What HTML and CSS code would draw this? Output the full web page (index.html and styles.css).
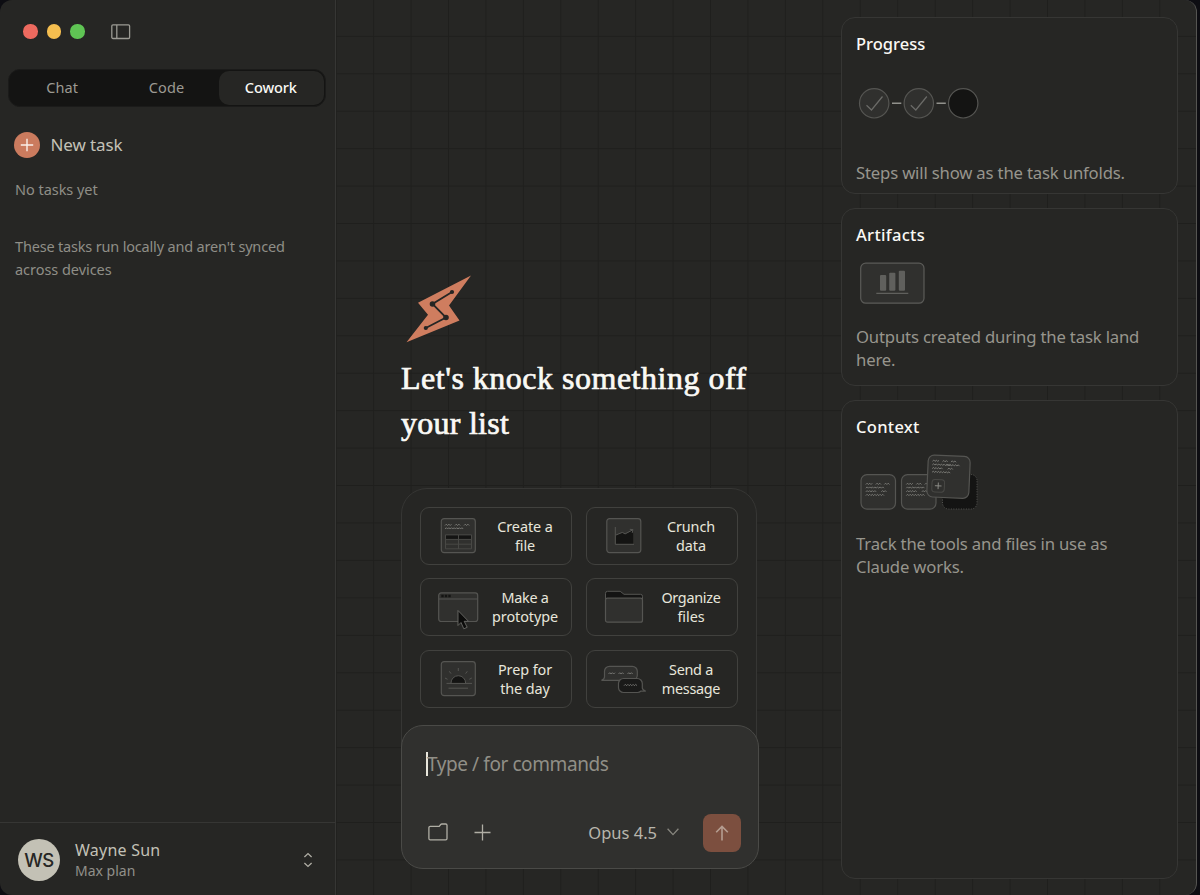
FILE: index.html
```html
<!DOCTYPE html>
<html lang="en">
<head>
<meta charset="utf-8">
<title>Cowork</title>
<link rel="stylesheet" href="styles.css">
</head>
<body>
<div class="window">
  <aside class="sidebar">
    <div class="titlebar">
      <span class="light light-red"></span>
      <span class="light light-yellow"></span>
      <span class="light light-green"></span>
      <svg class="panel-icon" width="20" height="16" viewBox="0 0 20 16"><rect x=".8" y=".9" width="17.800" height="13.600" rx="1.200"/><path d="M5.800.9v13.600"/></svg>
    </div>
    <nav class="tabs">
      <span class="tab">Chat</span>
      <span class="tab">Code</span>
      <span class="tab tab-active">Cowork</span>
    </nav>
    <div class="new-task">
      <svg width="26" height="26" viewBox="0 0 26 26"><circle cx="13" cy="13" r="13" fill="#cb7b5e"/><path d="M13 6.800v12.400M6.800 13h12.400" stroke="#fbefe9" stroke-width="1.400"/></svg>
      <span class="new-task-label">New task</span>
    </div>
    <p class="side-note">No tasks yet</p>
    <p class="side-note side-info"><span class="snug">These tasks run locally and aren't synced</span><br>across devices</p>
    <div class="account">
      <span class="avatar">WS</span>
      <div class="account-text">
        <div class="account-name">Wayne Sun</div>
        <div class="account-plan">Max plan</div>
      </div>
      <svg class="updown" width="10" height="16" viewBox="0 0 10 16"><path d="M1.400 5 5 1.600 8.600 5M1.400 11 5 14.400 8.600 11"/></svg>
    </div>
  </aside>

  <main class="main">
    <svg class="bolt" width="68" height="70" viewBox="0 0 68 70">
      <path d="M66 1.500 13 28.800l10 12L1.500 68.300 54.500 46.500 44 31.500z" fill="#cf7d5f"/>
      <g stroke="#262624" stroke-width="1.800" fill="#262624"><path d="M47 18 27.500 30 41 43.500 20.800 54" fill="none"/><circle cx="47" cy="18" r="1.200"/><circle cx="27.500" cy="30" r="1.900"/><circle cx="41" cy="43.500" r="1.900"/><circle cx="20.800" cy="54" r="1.200"/></g>
    </svg>
    <h1 class="headline"><span class="headline-wide">Let's knock something off</span><br>your list</h1>

    <div class="ideas">
      <button class="idea">
        <svg class="art" width="50" height="36" viewBox="0 0 50 36">
          <rect class="sheet" x="8.300" y=".6" width="34" height="34" rx="2.800"/>
          <path class="wave" d="M12 7.500l1.300-1.300 1.300 1.300 1.300-1.300 1.300 1.300 1.300-1.300M22 7.500l1.300-1.300 1.300 1.300 1.300-1.300 1.300 1.300M31 7.500l1.300-1.300 1.300 1.300 1.300-1.300 1.300 1.300M12 11l1.300-1.300 1.300 1.300 1.300-1.300 1.300 1.300 1.300-1.300 1.300 1.300 1.300-1.300 1.300 1.300 1.300-1.300 1.300 1.300 1.300-1.300 1.300 1.300 1.300-1.300 1.300 1.300"/>
          <path fill="#141413" d="M13 17.300h25v3.700H13z"/>
          <path class="line line-soft" d="M12.500 16.800h26v14h-26zM12.500 21.400h26M12.500 26.200h26M25.500 17v14"/>
        </svg>
        <span class="label">Create a<br>file</span>
      </button>
      <button class="idea">
        <svg class="art" width="50" height="36" viewBox="0 0 50 36">
          <rect class="sheet" x="7.800" y=".6" width="34" height="34" rx="2.800"/>
          <path fill="#141413" d="M16.800 17l6.500-2.600 2.800 1.500L34.200 12v14H16.800z"/>
          <path class="line" d="M16.300 9v17.300H35M17 17l6.300-2.600 2.800 1.500 7.900-4.200M30.800 11.300l3.200.4-.8 3.200"/>
        </svg>
        <span class="label">Crunch<br>data</span>
      </button>
      <button class="idea">
        <svg class="art" width="50" height="36" viewBox="0 0 50 36">
          <rect class="sheet" x="5.700" y="3.900" width="39" height="28.600" rx="2.500"/>
          <path class="line" d="M5.700 10h39"/><path fill="#141413" d="M8.300 5.700h2.400v2.600H8.300zM11.800 5.700h2.400v2.600h-2.400zM15.300 5.700h2.400v2.600h-2.400z"/>
          <path d="M25 21.500v15l3-3 2.800 6.300 3.400-1.500-3-6h4.300z" fill="#0c0c0b" stroke="#6b6b68" stroke-width=".9"/>
        </svg>
        <span class="label"><span class="tight">Make a</span><br>prototype</span>
      </button>
      <button class="idea">
        <svg class="art" width="50" height="36" viewBox="0 0 50 36">
          <path d="M6.500 12V4.300a2 2 0 0 1 2-2h12.700l3.800 3h16.500a2 2 0 0 1 2 2V12z" fill="#141413" stroke="#555552"/>
          <rect class="sheet" x="6.500" y="9.200" width="37" height="24" rx="2"/>
        </svg>
        <span class="label"><span class="tight">Organize</span><br>files</span>
      </button>
      <button class="idea">
        <svg class="art" width="50" height="36" viewBox="0 0 50 36">
          <rect class="sheet" x="8.300" y=".6" width="34" height="34" rx="2.800"/>
          <path d="M18 22a7.300 7.300 0 0 1 14.600 0z" fill="#141413"/>
          <path class="line" d="M13.500 22.400h25.500M15.500 27.200h19.500M25.300 7v3M16.300 10.300l1.700 2.300M34.300 10.300l-1.700 2.300M12 17l2.500 1.300M38.800 17l-2.500 1.300M18 22a7.300 7.300 0 0 1 14.600 0"/>
        </svg>
        <span class="label">Prep for<br>the day</span>
      </button>
      <button class="idea">
        <svg class="art" width="50" height="36" viewBox="0 0 50 36">
          <path class="sheet" d="M10.500 5.300h22.800a5 5 0 0 1 5 5v4a5 5 0 0 1-5 5H2.500c1.800-.8 3-1.600 3-3.300v-5.700a5 5 0 0 1 5-5z"/>
          <path class="sheet sheet-dark" d="M24.500 17.500h13.800a5 5 0 0 1 5 5V27c0 1.300 1.300 2.200 3.500 3.200l-4.800-.2a5 5 0 0 1-3.700 1.500H24.500a5 5 0 0 1-5-5v-4a5 5 0 0 1 5-5z"/>
          <path class="wave" d="M9.500 13l1.300-1.300 1.300 1.300 1.300-1.300 1.300 1.300 1.300-1.300M19.500 13l1.300-1.300 1.300 1.300 1.300-1.300 1.300 1.300M28.500 13l1.300-1.300 1.300 1.300 1.300-1.300 1.300 1.300M25 24.700l1.300-1.300 1.300 1.300 1.300-1.300 1.300 1.300 1.300-1.300 1.300 1.300 1.300-1.300 1.300 1.300 1.300-1.300 1.300 1.300"/>
        </svg>
        <span class="label"><span class="tight">Send a</span><br><span class="tight">message</span></span>
      </button>
    </div>

    <div class="composer">
      <div class="prompt"><span class="caret"></span><span>Type / for commands</span></div>
      <div class="composer-bar">
        <svg class="tool" width="20" height="18" viewBox="0 0 20 18"><path d="M.9 4.600a1.300 1.300 0 0 1 1.300-1.300h9l1.500-1.800a1.500 1.500 0 0 1 1.100-.5h3.900a1.300 1.300 0 0 1 1.300 1.300v13.200a1.300 1.300 0 0 1-1.300 1.300H2.200A1.300 1.300 0 0 1 .9 15.500z"/></svg>
        <svg class="tool tool-plus" width="17" height="17" viewBox="0 0 17 17"><path d="M8.500.5v16M.5 8.500h16"/></svg>
        <span class="model">Opus 4.5</span>
        <svg class="chevron" width="12" height="8" viewBox="0 0 12 8"><path d="M.6.8 6 6.600 11.400.8"/></svg>
        <span class="send"><svg width="14" height="16" viewBox="0 0 14 16"><path d="M7 15.500V1.500M1.200 7.200 7 1.400l5.800 5.800"/></svg></span>
      </div>
    </div>
  </main>

  <section class="rail">
    <article class="card card-progress">
      <h2 class="card-title">Progress</h2>
      <svg class="figure" width="124" height="34" viewBox="0 0 124 34">
        <g fill="#30302e" stroke="#555552" stroke-width="1.200"><circle cx="18.200" cy="17.300" r="14.700"/><circle cx="62.800" cy="17.300" r="14.700"/><circle cx="107.200" cy="17.300" r="14.700" fill="#141413"/></g>
        <path d="M10.500 19.300l5 4.700 11-13.500M54.800 19.300l5 4.700 11-13.500" fill="none" stroke="#6b6b68" stroke-width="1.200"/>
        <path d="M36 17.300h9.300M80.500 17.300h9.300" stroke="#91918c" stroke-width="1.400"/>
      </svg>
      <p class="card-text">Steps will show as the task unfolds.</p>
    </article>
    <article class="card card-artifacts">
      <h2 class="card-title title-wide">Artifacts</h2>
      <svg class="figure" width="72" height="42" viewBox="0 0 72 42">
        <rect x="4.700" y="1.200" width="63.300" height="40" rx="5" fill="#30302e" stroke="#5b5b58" stroke-width="1.200"/>
        <g fill="#60605d"><rect x="24" y="13" width="6.200" height="15.800" rx="1"/><rect x="33.200" y="10.800" width="6.200" height="18" rx="1"/><rect x="42.800" y="8.700" width="6.200" height="20.100" rx="1"/></g>
        <path d="M20.300 31.300h32" stroke="#60605d" stroke-width="1.300"/>
      </svg>
      <p class="card-text">Outputs created during the task land<br>here.</p>
    </article>
    <article class="card card-context">
      <h2 class="card-title title-wide">Context</h2>
      <svg class="figure" width="124" height="60" viewBox="0 0 124 60">
        <defs>
          <path id="note" d="M0 1.500l1.300-1.300 1.300 1.300 1.300-1.300 1.300 1.300 1.300-1.300M10 1.500l1.300-1.300 1.300 1.300 1.300-1.300 1.300 1.300M18.500 1.500l1.300-1.300 1.300 1.300 1.300-1.300 1.300 1.300M0 5.200l1.300-1.300 1.300 1.300 1.300-1.300 1.300 1.300 1.300-1.300 1.300 1.300 1.300-1.300 1.300 1.300 1.300-1.300 1.300 1.300 1.300-1.300 1.300 1.300 1.300-1.300 1.300 1.300M0 8.900l1.300-1.300 1.300 1.300 1.300-1.300 1.300 1.300 1.300-1.300 1.300 1.300 1.300-1.300 1.300 1.300M15.500 8.900l1.300-1.300 1.300 1.300 1.300-1.300 1.300 1.300M0 12.600l1.300-1.300 1.300 1.300 1.300-1.300 1.300 1.300 1.300-1.300 1.300 1.300 1.300-1.300 1.300 1.300 1.300-1.300 1.300 1.300 1.300-1.300 1.300 1.300 1.300-1.300 1.300 1.300"/>
        </defs>
        <rect x="86.500" y="22.500" width="34.500" height="34.500" rx="6" fill="#141413" stroke="#555552" stroke-dasharray="1 1.500"/>
        <rect class="sheet" x="5" y="22.600" width="34.500" height="34.500" rx="6"/><use href="#note" class="wave" x="9.800" y="31"/>
        <rect class="sheet" x="45.500" y="22.600" width="34.500" height="34.500" rx="6"/><use href="#note" class="wave" x="50.300" y="31"/>
        <g transform="rotate(2.500 92.700 25)"><rect class="sheet" x="71.500" y="3.700" width="42" height="42" rx="6"/><use href="#note" class="wave" x="75.800" y="8.500"/><path class="wave" d="M90 13.700l1.300-1.300 1.300 1.300 1.300-1.300 1.300 1.300 1.300-1.300 1.300 1.300 1.300-1.300 1.300 1.300 1.300-1.300 1.300 1.300"/><rect x="76.300" y="28" width="12.500" height="12.500" rx="3" fill="none" stroke="#484845"/><path d="M82.600 31v6.600M79.300 34.300h6.600" stroke="#91918c" stroke-width=".9"/></g>
      </svg>
      <p class="card-text">Track the tools and files in use as<br>Claude works.</p>
    </article>
  </section>
</div>
</body>
</html>
```
FILE: styles.css
```css
* { box-sizing: border-box; }
body { margin: 0; width: 1200px; height: 895px; overflow: hidden; background: #0d0d12; font-family: "Noto Sans", "Liberation Sans", sans-serif; color: #c3c1b7; }
h1, h2, p { margin: 0; font-weight: 400; }
svg { display: block; flex: none; overflow: visible; }

.window { width: 1197px; height: 895px; display: flex; background: #262624; border-right: 1px solid #555552; border-radius: 12px; overflow: hidden; white-space: nowrap; }

.sidebar { width: 336px; flex: none; border-right: 1px solid #363634; display: flex; flex-direction: column; }
.titlebar { height: 63px; padding: 0 0 0 23px; display: flex; align-items: center; gap: 9px; }
.light { width: 14.5px; height: 14.5px; border-radius: 50%; }
.light-red { background: #ed6a5f; }
.light-yellow { background: #f5be4f; }
.light-green { background: #5fc454; }
.panel-icon { margin-left: 17px; fill: none; stroke: #9b9a93; stroke-width: 1.3; }

.tabs { margin: 6px 9px 0 8px; height: 38px; padding: 1px; border-radius: 12px; background: #141413; display: flex; border: 1px solid #1b1b1a; }
.tab { flex: 1; display: flex; align-items: center; justify-content: center; padding-bottom: 2px; font-size: 14.5px; letter-spacing: .08px; color: #9c9a92; border-radius: 10px; }
.tab-active { background: #262624; color: #faf9f5; font-weight: 500; letter-spacing: -.08px; padding-right: 1px; }

.new-task { margin: 25px 0 0 14px; height: 26px; display: flex; align-items: center; gap: 10.5px; font-size: 17px; letter-spacing: -.1px; color: #c3c1b7; }
.new-task-label { padding-bottom: 2px; }
.side-note { margin: 20px 0 0 15px; font-size: 14.5px; line-height: 23px; letter-spacing: -.04px; color: #8f8e87; }
.side-info { margin-top: 34px; }
.snug { letter-spacing: -.18px; }
.account { margin-top: auto; height: 73px; border-top: 1px solid #363634; padding: 2px 22px 0 18px; display: flex; align-items: center; }
.avatar { width: 42px; height: 42px; border-radius: 50%; background: #c3c1b5; color: #262624; font: 500 18.5px Inter, sans-serif; display: flex; align-items: center; justify-content: center; letter-spacing: -.5px; }
.account-text { margin-left: 15px; flex: 1; }
.account-name { font-size: 16px; line-height: 22px; letter-spacing: .24px; color: #c3c1b7; }
.account-plan { font-size: 14px; line-height: 20px; color: #91908a; }
.updown { fill: none; stroke: #b0aea5; stroke-width: 1.3; }

/* The grid runs on behind the right-hand cards. */
.main { flex: 1; min-width: 0; margin-right: -361px; padding: 274px 443px 0 65px; background-image: linear-gradient(90deg, #1f1f1d 1.2px, transparent 1.2px), linear-gradient(#1f1f1d 1.2px, transparent 1.2px); background-size: 37.45px 37.45px; background-position: 37.1px 35.8px; }
.bolt { margin-left: 4px; }
.headline { margin-top: 12px; height: 90px; font-family: "Liberation Serif", serif; font-size: 32px; line-height: 45px; letter-spacing: .25px; color: #faf9f5; -webkit-text-stroke: .7px #faf9f5; }
.headline-wide { letter-spacing: .5px; }

.ideas { width: 356px; height: 260px; margin-top: 42px; padding: 18px 18px 0; border: 1px solid #363634; border-radius: 26px 26px 0 0; background: #262624; display: grid; grid-template-columns: 152px 152px; grid-auto-rows: 57.8px; column-gap: 14px; row-gap: 13.6px; }
.idea { background: none; border: 1px solid #41413e; border-radius: 9px; padding: 0 0 0 12px; display: flex; align-items: center; font: inherit; color: #e8e6dc; }
.label { width: 68px; margin-left: 8px; text-align: center; font-size: 14.4px; line-height: 19px; letter-spacing: -.08px; }
.tight { letter-spacing: -.28px; }
.sheet { fill: #30302e; stroke: #555552; stroke-width: 1.2; }
.sheet-dark { fill: #1a1a19; }
.line { fill: none; stroke: #555552; stroke-width: 1; }
.line-soft { stroke: #484845; }
.wave { fill: none; stroke: #91918c; stroke-width: .7; }

.composer { position: relative; width: 358px; height: 144px; margin-top: -23px; padding: 25px 17px 0 24px; border: 1px solid #4a4a47; border-radius: 22px; background: #30302e; }
.prompt { display: flex; align-items: center; font-size: 19px; line-height: 26px; letter-spacing: -.42px; color: #918f87; }
.caret { width: 1.5px; height: 24px; margin-right: -.5px; background: #e8e6dc; }
.composer-bar { margin-top: 36px; display: flex; align-items: center; height: 38px; }
.tool { margin-left: 2px; fill: none; stroke: #b0aea5; stroke-width: 1.3; }
.tool-plus { margin-left: 26px; }
.model { margin-left: auto; font-size: 16.5px; color: #b8b6ad; }
.chevron { margin-left: 10px; fill: none; stroke: #87867f; stroke-width: 1.3; }
.send { margin: 1px 0 0 24px; width: 38px; height: 38px; border-radius: 8px; background: #7c4f3f; display: flex; align-items: center; justify-content: center; }
.send svg { fill: none; stroke: #b59d91; stroke-width: 1.6; }

.rail { position: relative; width: 361px; padding: 17px 18px 0 6px; display: flex; flex-direction: column; gap: 14px; flex: none; }
.card { border: 1px solid #363634; border-radius: 14px; background: #262624; padding: 13px 14px 0; display: flex; flex-direction: column; width: 337px; }
.card-progress { height: 177px; }
.card-artifacts { height: 178px; }
.card-context { height: 479px; }
.card-title { font-size: 16.5px; line-height: 26px; font-weight: 500; color: #faf9f5; }
.title-wide { letter-spacing: .3px; }
.card-text { font-size: 16.7px; line-height: 23px; letter-spacing: -.17px; color: #97958d; }
.card-progress .figure { margin: 29px 0 41px; }
.card-artifacts .figure { margin: 14px 0 21px; }
.card-context .figure { margin: 12px 0 20px; }
```
